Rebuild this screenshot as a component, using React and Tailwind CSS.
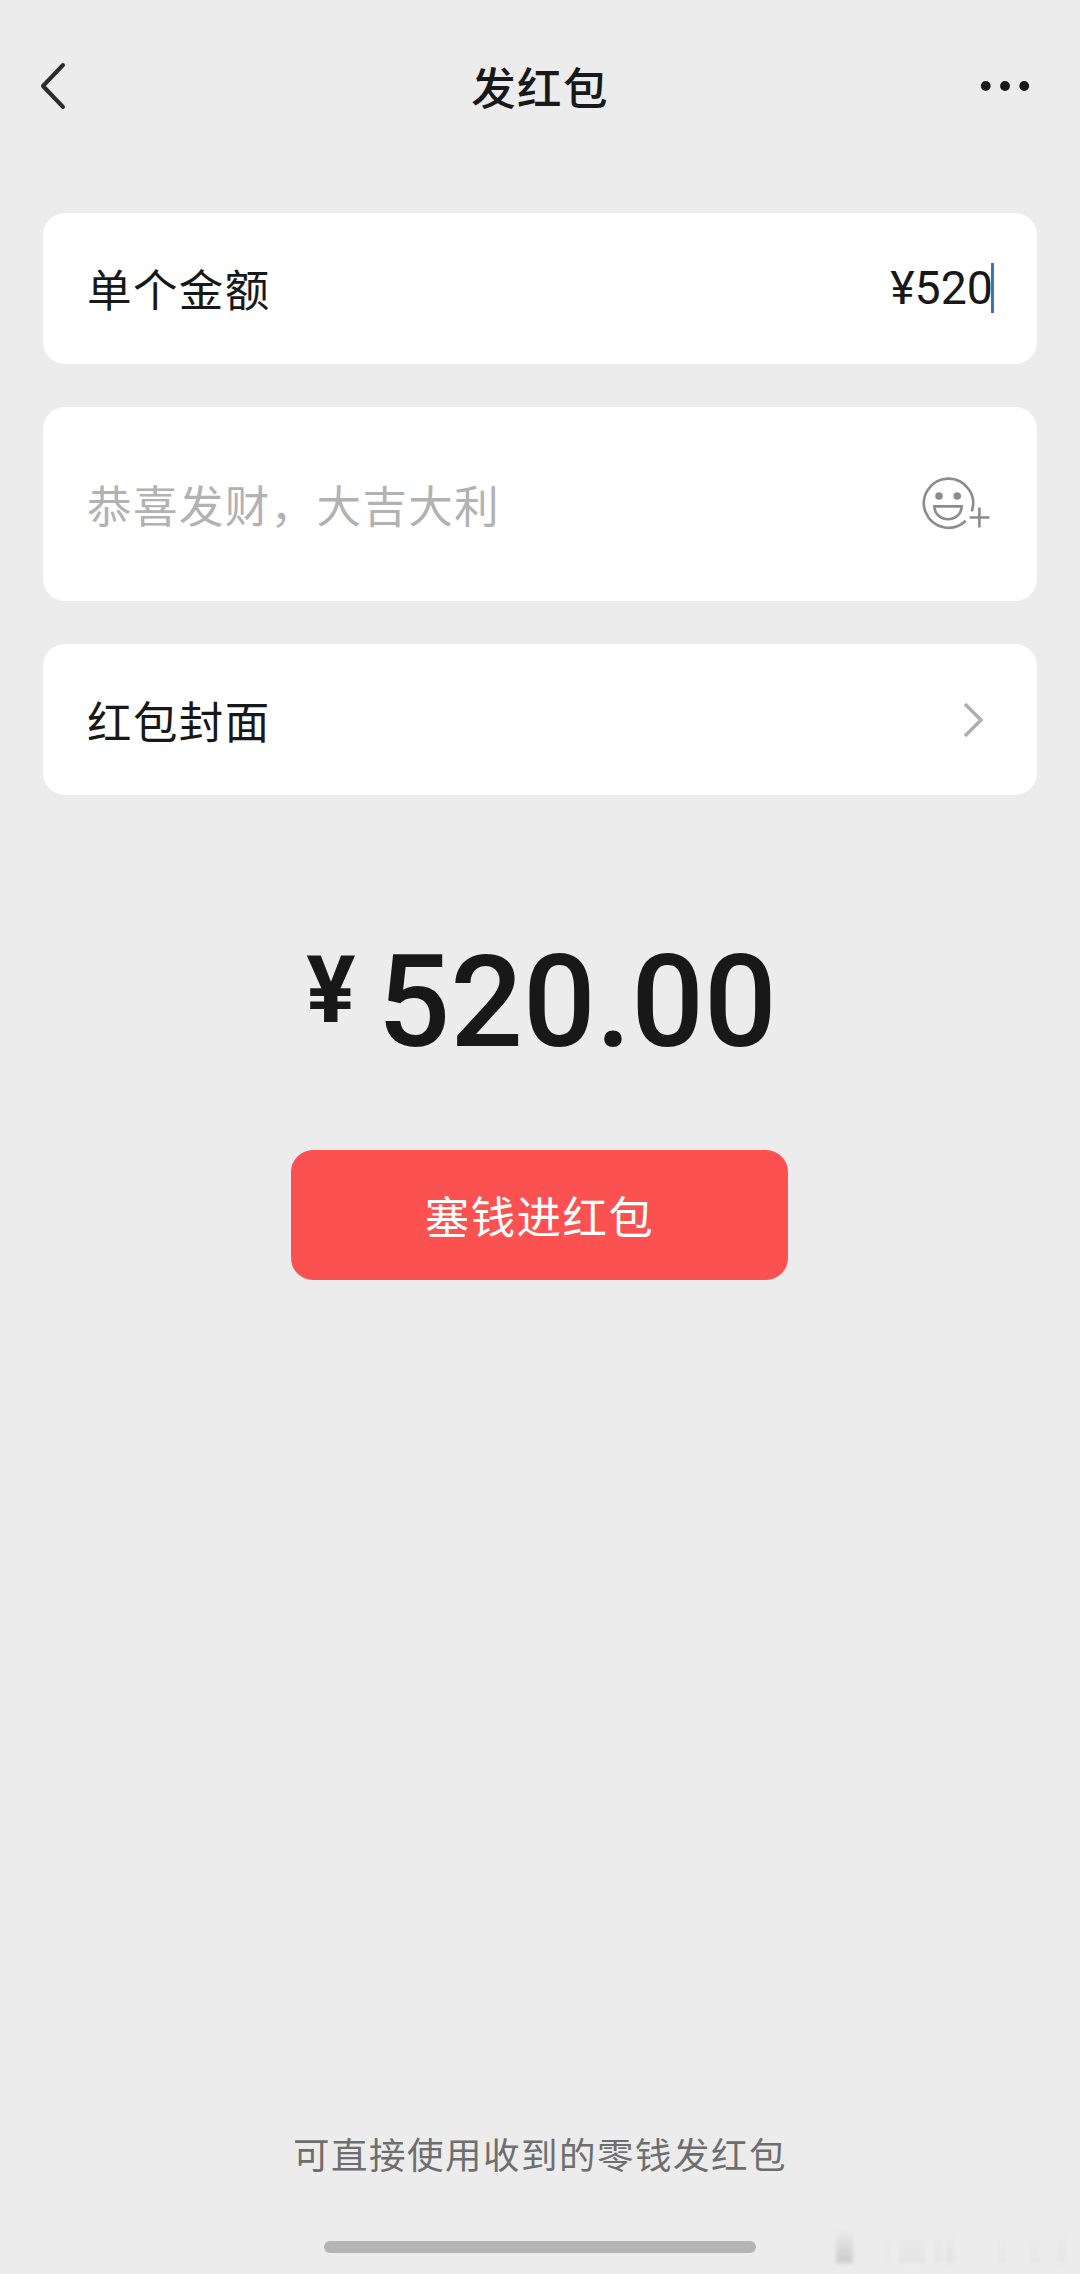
const labelFont = "font-['Noto_Sans_CJK_SC',sans-serif]";
const numberFont = "font-['Roboto','Noto_Sans_CJK_SC',sans-serif]";
const labelText = "text-[44.5px] leading-none tracking-[1.4px]";

// faint vertical streaks in the bottom right corner
const streaks = [
  { left: 2, width: 17, opacity: 0.14 },
  { left: 49, width: 8, opacity: 0.015 },
  { left: 65, width: 26, opacity: 0.03 },
  { left: 101, width: 7, opacity: 0.03 },
  { left: 112, width: 8, opacity: 0.045 },
  { left: 164, width: 8, opacity: 0.02 },
  { left: 196, width: 9, opacity: 0.025 },
  { left: 224, width: 8, opacity: 0.035 },
];

function BackIcon() {
  return (
    <svg width="30" height="52" viewBox="0 0 30 52" fill="none" stroke="#2b2b2b" strokeWidth="4">
      <path d="M25 5 L5 26 L25 47" strokeLinecap="round" strokeLinejoin="round" />
    </svg>
  );
}

function MoreIcon() {
  return (
    <svg width="50" height="12" viewBox="0 0 50 12" fill="#181818">
      <circle cx="5.7" cy="6" r="4.9" />
      <circle cx="25" cy="6" r="4.9" />
      <circle cx="44.2" cy="6" r="4.9" />
    </svg>
  );
}

function EmojiIcon() {
  return (
    <svg width="72" height="60" viewBox="0 0 72 60" fill="none" stroke="#8c8c8c" strokeWidth="2.6">
      <path d="M51.7 37.4 A24.6 24.6 0 1 0 45.7 46.8" />
      <circle cx="19" cy="22" r="3.8" fill="#8c8c8c" stroke="none" />
      <circle cx="37.2" cy="22" r="3.8" fill="#8c8c8c" stroke="none" />
      <path d="M14.4 32.4 H41.6 C41.6 39.6 35.6 45.2 28 45.2 C20.4 45.2 14.4 39.6 14.4 32.4 Z" />
      <path d="M49.6 43.5 H69.4 M59.4 33.6 V53.6" />
    </svg>
  );
}

function ArrowIcon() {
  return (
    <svg width="24" height="40" viewBox="0 0 24 40" fill="none" stroke="#b0b0b0" strokeWidth="3.6">
      <path d="M4 4 L20 20 L4 36" />
    </svg>
  );
}

function Card({ className, children }) {
  return (
    <div className={`flex items-center justify-between rounded-[22px] bg-white pl-11 ${className}`}>
      {children}
    </div>
  );
}

function App() {
  return (
    <div className={`relative flex h-[2274px] w-[1080px] flex-col overflow-hidden bg-[#ececec] text-[#181818] ${labelFont}`}>
      {/* Header */}
      <header className="grid h-[172px] grid-cols-3 items-center px-[38px]">
        <button className="justify-self-start">
          <BackIcon />
        </button>
        <h1 className="justify-self-center text-[44.5px] leading-none font-medium tracking-[1.4px]">发红包</h1>
        <button className="mr-[12px] justify-self-end">
          <MoreIcon />
        </button>
      </header>

      {/* Form */}
      <main className="flex flex-col px-[43px] pt-[41px]">
        <Card className="h-[151px] pr-[43px]">
          <span className={labelText}>单个金额</span>
          <div className="flex items-center pb-px">
            <span className={`text-[46.5px] leading-none ${numberFont}`}>¥520</span>
            <span className="-ml-[2px] h-[50px] w-[3px] bg-[#4170b8]"></span>
          </div>
        </Card>

        <Card className="mt-[43px] h-[194px] pr-[45px]">
          <span className={`pt-px text-[#b2b2b2] ${labelText}`}>恭喜发财，大吉大利</span>
          <EmojiIcon />
        </Card>

        <Card className="mt-[43px] h-[151px] pr-[52px]">
          <span className={`pt-px ${labelText}`}>红包封面</span>
          <ArrowIcon />
        </Card>

        <div className={`mt-[142px] ml-[3px] flex h-[128px] items-start justify-center font-medium ${numberFont}`}>
          <span className="mt-[8px] mr-[22px] text-[92px] leading-none font-bold">¥</span>
          <span className="text-[128px] leading-[130px]">520.00</span>
        </div>

        <button className="mt-[85px] ml-[248px] flex h-[130px] w-[497px] items-center justify-center rounded-[22px] bg-[#fb5151] text-[44.5px] leading-none tracking-[1.4px] text-white">
          塞钱进红包
        </button>
      </main>

      {/* Footer */}
      <footer className="mt-auto flex flex-col items-center pb-[21px]">
        <p className="text-[36.5px] leading-none tracking-[1.5px] text-[#6e6e6e]">可直接使用收到的零钱发红包</p>
        <div className="mt-[69px] h-3 w-[432px] rounded-full bg-[#b4b4b4]"></div>
      </footer>

      <div className="absolute right-0 bottom-[11px] h-[34px] w-[246px]">
        {streaks.map((s) => (
          <span
            key={s.left}
            className="absolute inset-y-0 bg-linear-to-b from-transparent to-black blur-[2px]"
            style={{ left: s.left, width: s.width, opacity: s.opacity }}
          ></span>
        ))}
      </div>
    </div>
  );
}

export default App;
